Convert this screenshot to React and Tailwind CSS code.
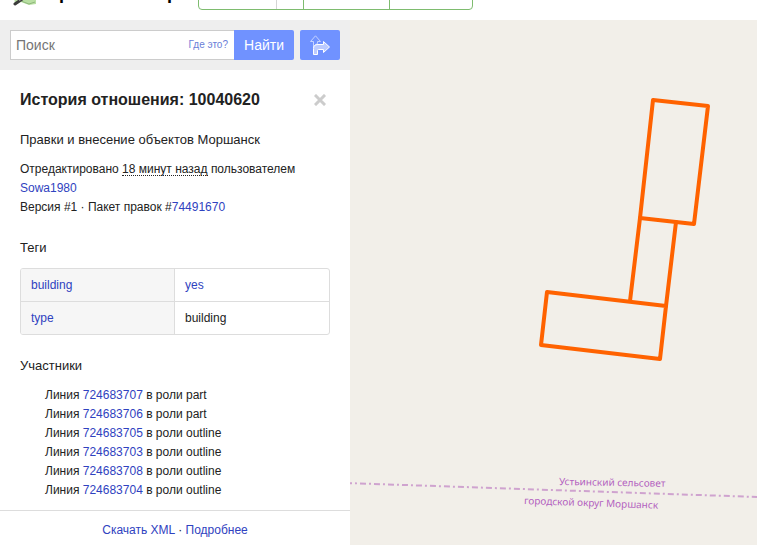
import React, { useState } from 'react';

const tags = [
    { key: 'building', value: 'yes', linked: true },
    { key: 'type', value: 'building', linked: false }
];

const members = [
    { id: '724683707', role: 'part' },
    { id: '724683706', role: 'part' },
    { id: '724683705', role: 'outline' },
    { id: '724683703', role: 'outline' },
    { id: '724683708', role: 'outline' },
    { id: '724683704', role: 'outline' }
];

const Link = ({ children }) => (
    <a href="#" className="text-[#2f42c0] hover:underline">{children}</a>
);

const Logo = () => (
    <svg width="26" height="24" viewBox="0 0 26 24" aria-hidden="true">
        <path d="M2 4 L10 1 L18 4 L25 1 V22 L18 23 L10 20 L4 23 Z" fill="#b9dfa3" />
        <path d="M10 19 L18 22 L24 20" fill="none" stroke="#8fb87c" />
        <path d="M14 15 L4 22" stroke="#3b3b3b" strokeWidth="3" strokeLinecap="round" />
        <path d="M14 14 L8 18" stroke="#d8d8d8" strokeWidth="2" />
    </svg>
);

const Header = () => (
    <header className="flex h-5 items-end overflow-hidden bg-white pl-[11px]">
        <a href="#" className="flex items-end">
            <span className="pb-[14px]"><Logo /></span>
            <span className="pb-[17px] pl-2 text-[18px] leading-5 font-bold text-black">OpenStreetMap</span>
        </a>
        <div className="ml-5 mb-[10px] flex h-8 shrink-0 divide-x divide-[#7ebc6f] rounded-[4px] border border-[#7ebc6f]">
            <div className="flex w-[105px] divide-x divide-[#d5d5d5]">
                <button aria-label="Править" className="w-[78px]" />
                <button aria-label="Выбрать редактор" className="flex-1" />
            </div>
            <button aria-label="История" className="w-[86px]" />
            <button aria-label="Экспорт" className="w-[82px]" />
        </div>
    </header>
);

const SearchBar = () => {
    const [query, setQuery] = useState('');

    return (
        <form onSubmit={(e) => e.preventDefault()} className="flex gap-[6px] bg-[#eeeeee] p-[10px]">
            <div className="flex h-[30px] flex-1">
                <div className="flex min-w-0 flex-1 items-center border border-r-0 border-[#cccccc] bg-white">
                    <input
                        type="text"
                        aria-label="Поиск"
                        placeholder="Поиск"
                        value={query}
                        onChange={(e) => setQuery(e.target.value)}
                        className="h-full min-w-0 flex-1 pl-[5px] text-[14px] text-[#333333] placeholder:text-[#757575] focus:outline-none"
                    />
                    <a href="#" className="pr-[6px] pb-[2px] text-[10px] text-[#6a80d8]">Где это?</a>
                </div>
                <button type="submit" className="w-[60px] rounded-r-[2px] bg-[#7092ff] text-[14px] text-white">
                    Найти
                </button>
            </div>
            <button type="button" aria-label="Проложить маршрут" className="flex h-[30px] w-10 items-center justify-center rounded-[2px] bg-[#7092ff]">
                <svg width="20" height="20" viewBox="0 0 20 20" strokeLinejoin="miter">
                    <path d="M3.5 12.500 V6.500 H0.500 L5.500 0.800 L10.500 6.500 H7.500 V8.500 Q4.500 9.500 3.500 12.500 Z" fill="none" stroke="#c5d2ff" />
                    <path d="M3.500 19.500 V13.500 Q3.500 9.500 8 9.500 H13.500 V6.500 L19.500 12 L13.500 17.500 V14.500 H8.500 Q7.500 14.500 7.500 15.500 V19.500 Z" fill="#bccbff" stroke="#ffffff" />
                </svg>
            </button>
        </form>
    );
};

const RelationPanel = () => (
    <>
        <section className="px-5 pt-5 text-[12px] leading-[19px] text-[#222222]">
            <div className="flex items-center justify-between">
                <h2 className="text-[16px] leading-5 font-bold">История отношения: 10040620</h2>
                <button aria-label="Закрыть" className="pr-1">
                    <svg width="12" height="12" viewBox="0 0 12 12">
                        <path d="M2 2 L10 10 M10 2 L2 10" stroke="#cccccc" strokeWidth="3" strokeLinecap="square" />
                    </svg>
                </button>
            </div>

            <h4 className="mt-5 text-[13px] leading-5">Правки и внесение объектов Моршанск</h4>

            <div className="mt-[10px]">
                <p>
                    Отредактировано{' '}
                    <abbr title="18 минут назад" className="inline-block border-b border-dotted border-[#222222] leading-3 no-underline">18 минут назад</abbr>
                    {' '}пользователем <Link>Sowa1980</Link>
                </p>
                <p>Версия #1 · Пакет правок #<Link>74491670</Link></p>
            </div>

            <h4 className="mt-[21px] text-[13px] leading-5">Теги</h4>
            <div className="mt-[10px] overflow-hidden rounded-[3px] border border-[#dddddd]">
                <table className="w-full table-fixed border-separate border-spacing-0">
                    <tbody>
                        {tags.map((tag, i) => (
                            <tr key={tag.key} className={i === 0 ? 'h-8' : 'h-[33px] *:border-t *:border-[#dddddd]'}>
                                <th scope="row" className="border-r border-[#dddddd] bg-[#f6f6f6] px-[10px] text-left font-normal">
                                    <Link>{tag.key}</Link>
                                </th>
                                <td className="px-[10px]">
                                    {tag.linked ? <Link>{tag.value}</Link> : tag.value}
                                </td>
                            </tr>
                        ))}
                    </tbody>
                </table>
            </div>

            <h4 className="mt-[21px] text-[13px] leading-5">Участники</h4>
            <ul className="mt-[10px] pl-[25px]">
                {members.map((member) => (
                    <li key={member.id}>
                        Линия <Link>{member.id}</Link> в роли {member.role}
                    </li>
                ))}
            </ul>
        </section>

        <div className="mt-[10px] border-t border-[#dddddd] py-[10px] text-center text-[12px] leading-[19px] text-[#222222]">
            <Link>Скачать XML</Link> · <Link>Подробнее</Link>
        </div>
    </>
);

const MapView = () => (
    <main className="min-w-0 flex-1 overflow-hidden bg-[#f2efe9]">
        <svg width="100%" height="100%" role="img" aria-label="Карта">
            {/* district boundary */}
            <path d="M-4 463 L407 477" stroke="#cfa3cf" strokeWidth="2" strokeDasharray="6 3 2 3" />
            <g fill="#b25fc0" fontFamily="'Noto Sans', sans-serif" fontSize="10">
                <text x="209" y="465" transform="rotate(1 209 465)">Устьинский сельсовет</text>
                <text x="174" y="484" transform="rotate(2 174 484)">городской округ Моршанск</text>
            </g>

            {/* relation members */}
            <g fill="none" stroke="#ff6200" strokeWidth="4" strokeLinejoin="round" strokeLinecap="round">
                <path d="M303 80 L358 86 L344 204 L290 198 Z" />
                <path d="M290 198 L280 281 M326 202 L316 286" />
                <path d="M197 272 L316 286 L310 339 L191 325 Z" />
            </g>
        </svg>
    </main>
);

const App = () => (
    <div className="flex min-h-screen flex-col bg-white font-['Liberation_Sans',Arial,sans-serif]">
        <Header />
        <div className="flex flex-1">
            <aside className="w-[350px] shrink-0 bg-white">
                <SearchBar />
                <RelationPanel />
            </aside>
            <MapView />
        </div>
    </div>
);

export default App;
